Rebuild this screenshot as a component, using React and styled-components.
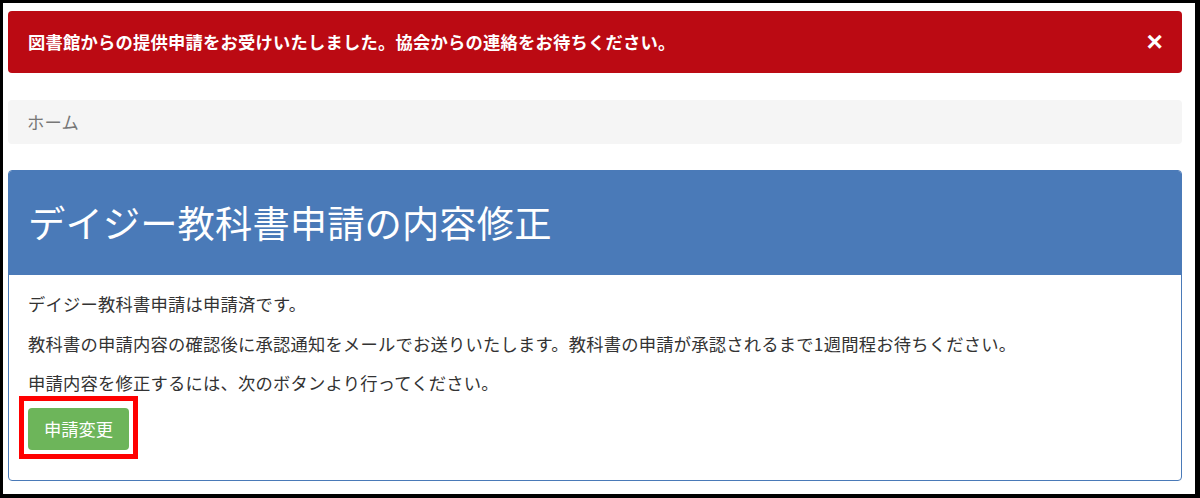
import React from "react";
import styled, { createGlobalStyle } from "styled-components";

const GlobalStyle = createGlobalStyle`
  html, body {
    margin: 0;
    padding: 0;
    background: #fff;
  }
  * {
    box-sizing: border-box;
  }
  body {
    font-family: "Noto Sans CJK JP", "Noto Sans", sans-serif;
    font-size: 17.3px;
    letter-spacing: 0.22px;
    color: #333;
  }
`;

const Frame = styled.div`
  width: 1200px;
  height: 498px;
  border-style: solid;
  border-color: #000;
  border-width: 3px 5px 4px 3px;
  padding: 8px 13px 0 5px;
  background: #fff;
  overflow: hidden;
`;

const Alert = styled.div`
  display: flex;
  align-items: center;
  justify-content: space-between;
  height: 62px;
  padding: 0 19px 0 20px;
  background: #bb0a13;
  border-radius: 4px;
  color: #fff;
  font-weight: 700;
  line-height: 1;
`;

const Close = styled.span`
  font-family: "Liberation Sans", Arial, sans-serif;
  font-size: 28px;
  font-weight: 700;
  line-height: 1;
  color: #fff;
  cursor: pointer;
`;

const Breadcrumb = styled.div`
  display: flex;
  align-items: center;
  height: 44px;
  margin-top: 27px;
  padding: 0 0 2px 19px;
  background: #f5f5f5;
  border-radius: 4px;
  color: #777;
`;

const Panel = styled.section`
  margin-top: 26px;
  border: 1px solid #4a7ab8;
  border-radius: 4px;
  overflow: hidden;
`;

const PanelHeading = styled.div`
  display: flex;
  align-items: center;
  height: 104px;
  padding-left: 19px;
  background: #4a7ab8;
`;

const Title = styled.h1`
  margin: 0;
  font-size: 37.3px;
  font-weight: 400;
  letter-spacing: 0.1px;
  line-height: 1;
  color: #fff;
`;

const PanelBody = styled.div`
  padding: 16px 19px 30px;
`;

const Text = styled.p`
  margin: 0 0 13.5px;
  line-height: 26px;
`;

const Highlight = styled.span`
  position: relative;
  display: inline-block;
  margin-top: -1.5px;

  &::after {
    content: "";
    position: absolute;
    left: -9px;
    right: -9px;
    top: -12px;
    bottom: -9px;
    border: 5px solid #ff0000;
    pointer-events: none;
  }
`;

const Button = styled.button`
  display: block;
  height: 42px;
  padding: 0 16px;
  border: none;
  border-radius: 4px;
  background: #6db55a;
  color: #fff;
  font-family: inherit;
  font-size: 17.3px;
  letter-spacing: 0;
  line-height: 1;
  cursor: pointer;
`;

export default function App() {
  return (
    <>
      <GlobalStyle />
      <Frame>
        <Alert>
          <span>図書館からの提供申請をお受けいたしました。協会からの連絡をお待ちください。</span>
          <Close>×</Close>
        </Alert>
        <Breadcrumb>ホーム</Breadcrumb>
        <Panel>
          <PanelHeading>
            <Title>デイジー教科書申請の内容修正</Title>
          </PanelHeading>
          <PanelBody>
            <Text>デイジー教科書申請は申請済です。</Text>
            <Text>
              教科書の申請内容の確認後に承認通知をメールでお送りいたします。教科書の申請が承認されるまで1週間程お待ちください。
            </Text>
            <Text>申請内容を修正するには、次のボタンより行ってください。</Text>
            <Highlight>
              <Button>申請変更</Button>
            </Highlight>
          </PanelBody>
        </Panel>
      </Frame>
    </>
  );
}
